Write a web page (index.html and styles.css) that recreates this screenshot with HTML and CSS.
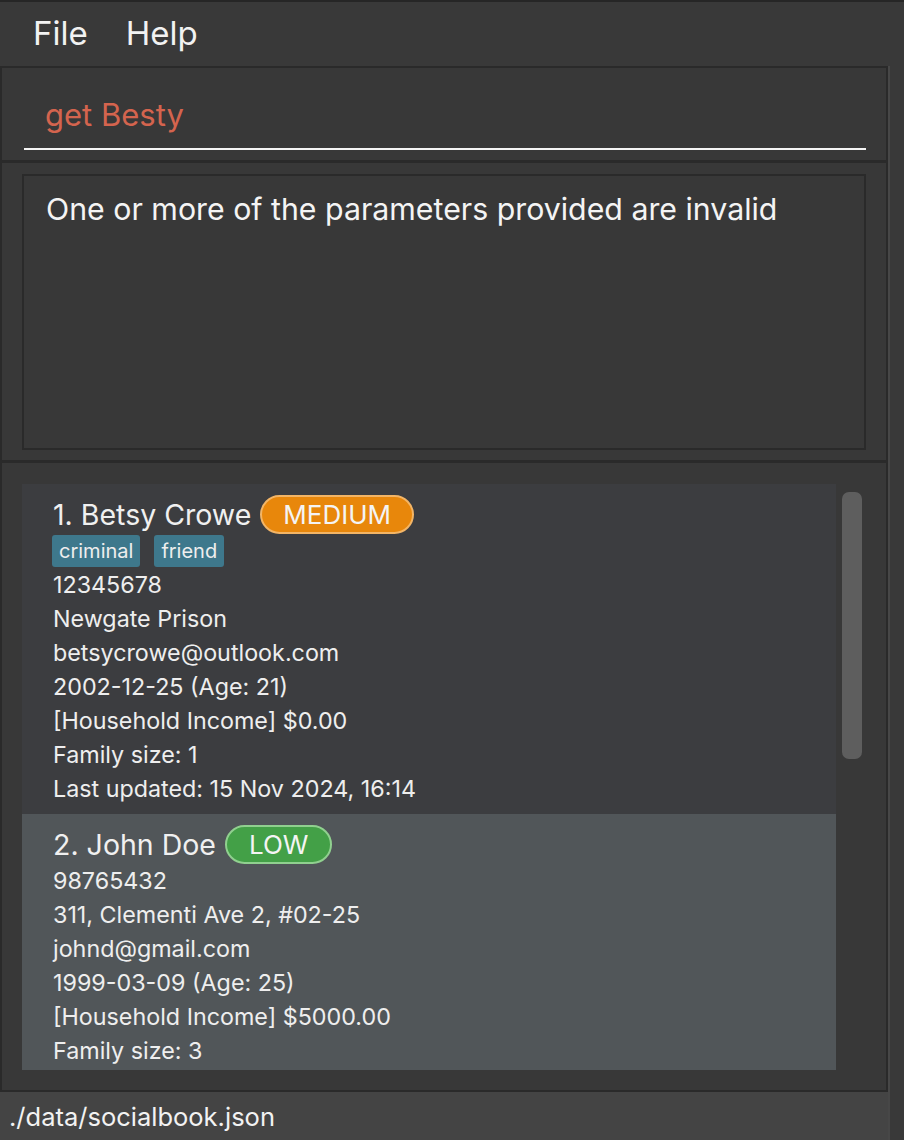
FILE: index.html
```html
<!DOCTYPE html>
<html>
<head>
<meta charset="utf-8">
<link rel="stylesheet" href="styles.css">
</head>
<body>
<div class="menubar">
  <span class="menu-item">File</span>
  <span class="menu-item">Help</span>
</div>
<div class="window">
  <div class="main">
    <div class="panel command-panel">
      <div class="command-field">get Besty</div>
    </div>
    <div class="panel result-panel">
      <div class="result-box">One or more of the parameters provided are invalid</div>
    </div>
    <div class="panel list-panel">
      <div class="list-viewport">
        <div class="cards">
          <div class="card card-dark">
            <div class="name-row">
              <span class="name">1. Betsy Crowe</span>
              <span class="badge badge-medium">MEDIUM</span>
            </div>
            <div class="tags">
              <span class="tag">criminal</span>
              <span class="tag">friend</span>
            </div>
            <div class="line">12345678</div>
            <div class="line">Newgate Prison</div>
            <div class="line">betsycrowe@outlook.com</div>
            <div class="line">2002-12-25 (Age: 21)</div>
            <div class="line">[Household Income] $0.00</div>
            <div class="line">Family size: 1</div>
            <div class="line">Last updated: 15 Nov 2024, 16:14</div>
          </div>
          <div class="card card-light">
            <div class="name-row">
              <span class="name">2. John Doe</span>
              <span class="badge badge-low">LOW</span>
            </div>
            <div class="line">98765432</div>
            <div class="line">311, Clementi Ave 2, #02-25</div>
            <div class="line">johnd@gmail.com</div>
            <div class="line">1999-03-09 (Age: 25)</div>
            <div class="line">[Household Income] $5000.00</div>
            <div class="line">Family size: 3</div>
          </div>
        </div>
        <div class="scroll-track">
          <div class="scroll-thumb"></div>
        </div>
      </div>
    </div>
    <div class="status-bar">./data/socialbook.json</div>
  </div>
  <div class="edge-line"></div>
  <div class="edge-fill"></div>
</div>
</body>
</html>
```

FILE: styles.css
```css
* {
  box-sizing: border-box;
}

html, body {
  margin: 0;
  padding: 0;
  background: #393939;
  width: 904px;
  height: 1140px;
  overflow: hidden;
  font-family: Inter, "Noto Sans", sans-serif;
  color: #eeeeee;
}

.menubar {
  height: 66px;
  border-top: 2px solid #262626;
  background: #393939;
  display: flex;
  align-items: center;
  padding-left: 33px;
  gap: 38px;
}

.menu-item {
  font-size: 33px;
  color: #f2f2f2;
  line-height: 1;
  padding-bottom: 2px;
}

.window {
  display: flex;
  height: 1074px;
}

.main {
  width: 888px;
  display: flex;
  flex-direction: column;
}

.edge-line {
  width: 2px;
  background: #474747;
}

.edge-fill {
  flex: 1;
  background: #393939;
}

.panel {
  background: #383838;
  border: 2px solid #2a2a2a;
}

.command-panel {
  height: 96px;
  padding: 12px 20px 10px 22px;
}

.command-field {
  height: 70px;
  border-bottom: 2px solid #f4f4f4;
  padding-left: 21px;
  display: flex;
  align-items: center;
  font-size: 31px;
  color: #d4644e;
}

.result-panel {
  height: 300px;
  border-top-width: 1px;
  padding: 11px 20px 10px 20px;
}

.result-box {
  height: 276px;
  border: 2px solid #2a2a2a;
  padding: 15px 20px 15px 22px;
  font-size: 30.3px;
  line-height: 36px;
  color: #f4f4f4;
  white-space: nowrap;
}

.list-panel {
  height: 630px;
  border-top-width: 1px;
  padding: 21px 20px 20px 20px;
}

.list-viewport {
  display: flex;
  height: 586px;
  overflow: hidden;
}

.cards {
  width: 814px;
  display: flex;
  flex-direction: column;
}

.card {
  padding: 10px 31px 8px 31px;
  flex-shrink: 0;
}

.card-dark {
  background: #3c3d40;
}

.card-light {
  background: #515659;
}

.name-row {
  height: 40px;
  display: flex;
  align-items: center;
  gap: 9px;
}

.name {
  font-size: 28.5px;
  color: #f0f0f0;
}

.badge {
  height: 39px;
  border-radius: 20px;
  padding: 0 21px;
  display: flex;
  align-items: center;
  font-size: 26px;
  color: #f4f4f4;
  border: 2px solid;
}

.badge-medium {
  background: #e8870b;
  border-color: #f3b566;
}

.badge-low {
  background: #43a047;
  border-color: #90d08f;
  padding: 0 22px;
}

.tags {
  height: 34px;
  display: flex;
  align-items: center;
  gap: 14px;
  margin-left: -1px;
}

.tag {
  height: 32px;
  background: #3e788c;
  border-radius: 3px;
  padding: 0 7px;
  display: flex;
  align-items: center;
  font-size: 20px;
  color: #eeeeee;
}

.line {
  font-size: 23.3px;
  line-height: 34px;
  height: 34px;
  color: #eeeeee;
  white-space: nowrap;
}

.scroll-track {
  width: 30px;
  padding: 8px 4px 0 6px;
}

.scroll-thumb {
  height: 267px;
  background: #5e5e5e;
  border-radius: 7px;
}

.status-bar {
  height: 48px;
  background: #444444;
  padding-left: 9px;
  display: flex;
  align-items: center;
  font-size: 25.5px;
  color: #f2f2f2;
}
```
